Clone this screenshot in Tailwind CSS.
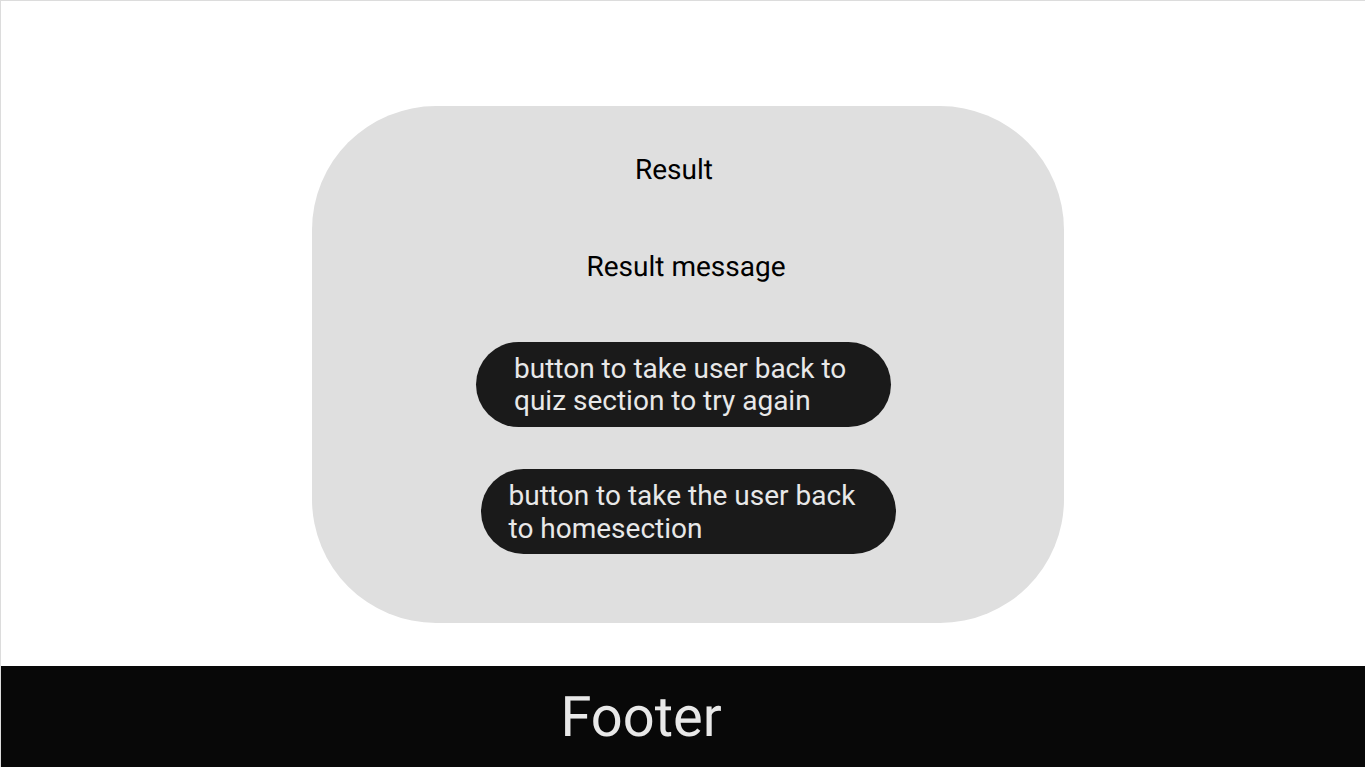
<!DOCTYPE html>
<html lang="en">
<head>
<meta charset="utf-8">
<meta name="viewport" content="width=device-width, initial-scale=1">
<title>Result</title>
<script src="https://cdn.jsdelivr.net/npm/@tailwindcss/browser@4"></script>
</head>
<body class="flex min-h-screen flex-col border-t border-l border-[#dcdcdc] bg-white font-['Roboto',sans-serif] text-black [text-rendering:geometricPrecision]">
<main class="flex grow flex-col items-center pt-[105px] pb-[43px] pl-[10px]">
  <section class="flex w-full max-w-[752px] grow flex-col items-center rounded-[124px] bg-[#dfdfdf] pt-12 text-[28px] leading-8">
    <h1 class="mr-7">Result</h1>
    <p class="mt-[65px] mr-1">Result message</p>
    <button type="button" class="mt-[59px] mr-[9px] h-[85px] w-full max-w-[415px] rounded-full bg-[#1a1a1a] pr-9 pl-[38px] text-left text-[#e8e8e8]">button to take user back to quiz section to try again</button>
    <button type="button" class="mt-[42px] h-[85px] w-full max-w-[415px] rounded-full bg-[#1a1a1a] pr-9 pl-7 text-left leading-[33px] text-[#e8e8e8]">button to take the user back to homesection</button>
  </section>
</main>
<footer class="flex h-[101px] items-center justify-center bg-[#080808] pr-[84px] text-[56px] leading-none text-[#e8e8e8]">
  <p>Footer</p>
</footer>
</body>
</html>
